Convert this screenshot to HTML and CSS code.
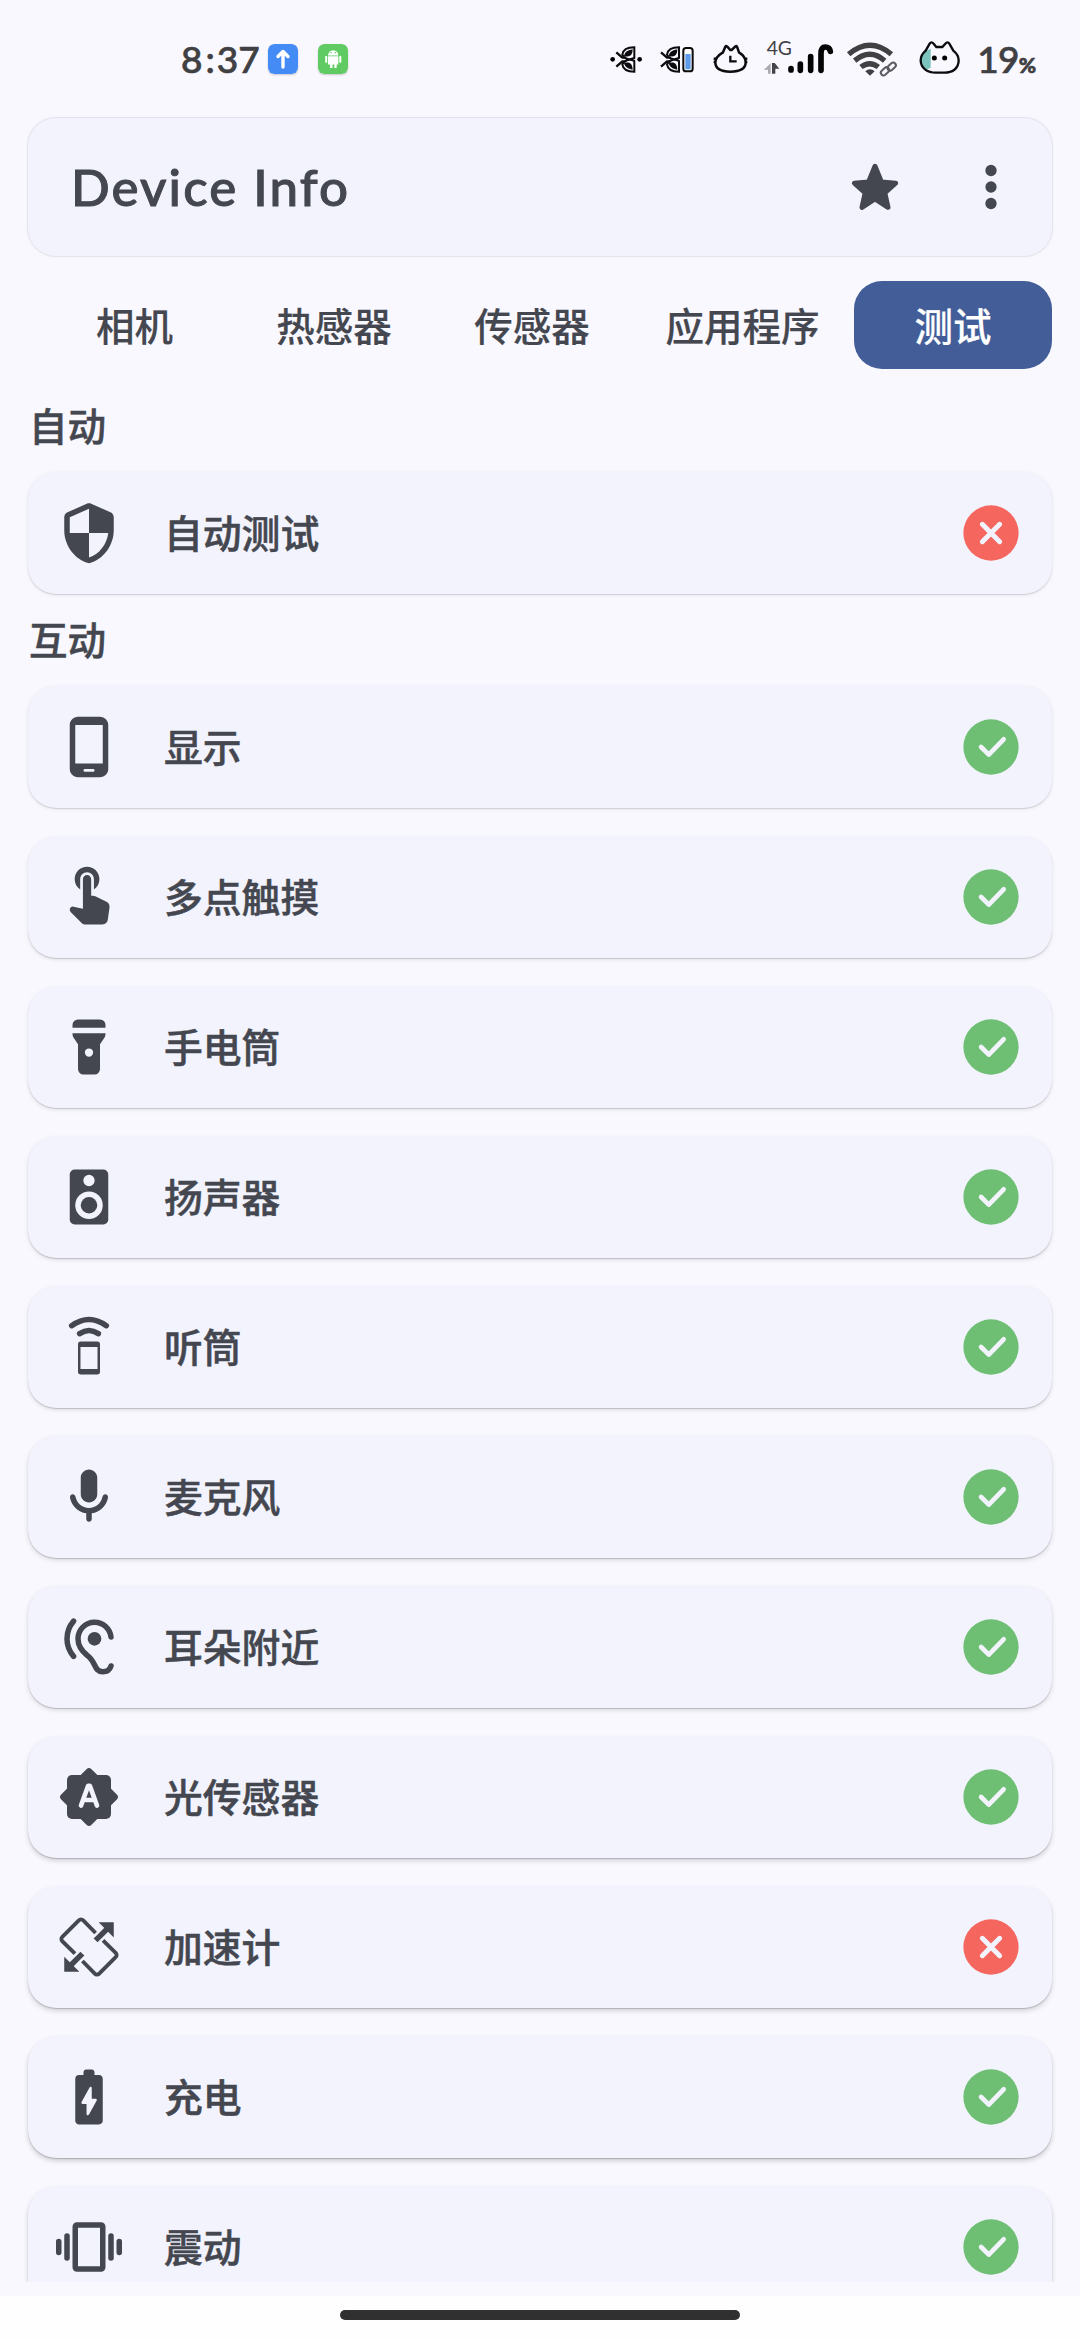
FILE: index.html
```html
<!DOCTYPE html>
<html lang="zh-CN">
<head>
<meta charset="utf-8">
<title>Device Info</title>
<link rel="stylesheet" href="styles.css">
</head>
<body>
<svg class="symbols" width="0" height="0">
  <symbol id="ok" viewBox="0 0 24 24"><circle class="green" cx="12" cy="12" r="10.05"/><path class="mark" stroke-width="1.7" d="M8.4 12l2.8 2.75L16.6 9.2"/></symbol>
  <symbol id="fail" viewBox="0 0 24 24"><circle class="red" cx="12" cy="12" r="10.05"/><path class="mark" stroke-width="1.8" d="M8.85 8.85l6.3 6.3M15.15 8.85l-6.3 6.3"/></symbol>
</svg>
<div class="screen">
  <div class="statusbar">
    <span class="clock">8<span class="colon">:</span>37</span>
    <svg class="chip" viewBox="0 0 30 30"><rect width="30" height="30" rx="6" fill="#448bf5"/><path d="M15 23V8.5M10 12.5l5-5 5 5" fill="none" stroke="#fff" stroke-width="3.4" stroke-linecap="round" stroke-linejoin="round"/></svg>
    <svg class="chip" viewBox="0 0 30 30"><rect width="30" height="30" rx="6" fill="#5fcb62"/><path fill="#fff" d="M10 11.5a5.2 5.2 0 0 1 10.4 0zM10 12.2h10.4v8.3h-1.7V24h-2.4v-3.5h-1.8V24h-2.4v-3.5H10zM7.2 12.2q1-1 2 0v6q-1 1-2 0zM21.3 12.2q1-1 2 0v6q-1 1-2 0z"/><path fill="#5fcb62" d="M12.5 8h1.2v1.2h-1.2zM16.8 8H18v1.2h-1.2z"/></svg>
    <div class="tray">
      <svg width="46.67" height="80" viewBox="50 0 140 240"><g id="leaf"><path d="M78 97l18 16h12M78 140l18-16h12" fill="none" stroke="#0c0c0e" stroke-width="7"/><path d="M96 104c2-14 14-22 36-22v32c-12 6-28 6-36-10zM96 133c2 14 14 22 36 22v-32c-12-6-28-6-36 10z" fill="none" stroke="#0c0c0e" stroke-width="6"/><path d="M101 107c4-12 11-16 26-19 0 20-12 25-26 19zM101 130c4 12 11 16 26 19 0-20-12-25-26-19z" fill="#0c0c0e"/></g><circle cx="67" cy="118" r="7"/><circle cx="148" cy="118" r="7"/></svg>
      <svg width="53.33" height="80" viewBox="190 0 160 240"><use href="#leaf" x="133"/><rect x="278" y="84" width="28" height="70" rx="8" fill="#fff" stroke="#0c0c0e" stroke-width="6"/><path d="M284 102h16v46h-16z" fill="#5d9bea"/></svg>
      <svg width="50" height="80" viewBox="350 0 150 240"><path d="M398 97l7-17q3-4 8 2l7 8h4l8-8q5-6 8-2l6 17c14 9 20 20 20 30 0 20-17 28-46 28s-45-8-45-28c0-10 8-21 23-30zM370 116h8M370 126h8M464 116h7M464 126h7" fill="none" stroke="#0c0c0e" stroke-width="7.5"/><path d="M420 107v17h19" fill="none" stroke="#0c0c0e" stroke-width="7"/></svg>
      <svg width="83.33" height="80" viewBox="500 0 250 240"><text class="network" x="529" y="105">4G</text><path d="M541 130v31h-8v-12l-13 1z" fill="#aaaab0"/><path d="M545 161v-32h8l14 17h-12v15z" fill="#444449"/><path d="M602 146v4M630 132v19M661 110v41M692 151v-50q0-20 13-20t15 13" fill="none" stroke="#050506" stroke-width="17" stroke-linecap="round"/></svg>
      <svg width="70" height="80" viewBox="750 0 210 240"><g fill="none" stroke="#414144" stroke-width="16"><path d="M776 103q64-54 128 0M794 122q46-38 90 0M813 141q26-20 52 0"/></g><path d="M826 154q14-12 28 0l-14 13z" fill="#414144"/><g fill="none" stroke="#5c5c60" stroke-width="6"><rect x="871" y="146" width="28" height="16" rx="8" transform="rotate(-42 885 154)"/><rect x="891" y="132" width="28" height="16" rx="8" transform="rotate(-42 905 140)"/></g></svg>
      <svg width="66" height="80" viewBox="960 0 198 240"><path d="M1022 86q-30 12-30 35 0 18 16 28l14-6z" fill="#7cc2bd"/><path d="M1007 92l12-21q5-8 12 0l8 10h18l9-10q7-8 12 0l12 21c11 9 16 18 16 29 0 26-20 37-43 37h-26c-23 0-45-12-45-37 0-12 6-21 15-29z" fill="none" stroke="#0c0c0e" stroke-width="7"/><circle cx="1033" cy="114" r="7.5"/><circle cx="1064" cy="114" r="7.5"/></svg>
      <span class="battery">19<small>%</small></span>
    </div>
  </div>

  <header class="appbar">
    <h1>Device Info</h1>
    <svg class="icon star" viewBox="0 0 66 66"><path stroke="#44474f" stroke-width="5" stroke-linejoin="round" d="M33 12.3l6.4 15.7 14.2 1.2-10.8 9.6 3.2 14.5L33 45l-13 8.3 3.2-14.5-10.8-9.6L26.6 28z"/></svg>
    <svg class="icon" viewBox="0 0 24 24"><circle cx="12" cy="6" r="2.05"/><circle cx="12" cy="12" r="2.05"/><circle cx="12" cy="18" r="2.05"/></svg>
  </header>

  <nav class="tabs">
    <span class="tab first">相机</span>
    <span class="tab">热感器</span>
    <span class="tab">传感器</span>
    <span class="tab wide">应用程序</span>
    <span class="tab active">测试</span>
  </nav>

  <main class="content">
    <h2 class="first">自动</h2>
    <div class="list">
      <div class="card s1">
        <svg class="icon" viewBox="0 0 24 24"><path d="M11.19 1.36l-7 3.11C3.47 4.79 3 5.51 3 6.3V11c0 5.55 3.84 10.74 9 12 5.16-1.26 9-6.45 9-12V6.3c0-.79-.47-1.51-1.19-1.83l-7-3.11c-.51-.23-1.11-.23-1.62 0zM12 11.99h7c-.53 4.12-3.28 7.79-7 8.94V12H5V6.3l7-3.11v8.8z"/></svg>
        <span class="label">自动测试</span><svg class="icon"><use href="#fail"/></svg>
      </div>
    </div>
    <h2>互动</h2>
    <div class="list">
      <div class="card s1">
        <svg class="icon" viewBox="0 0 24 24"><path fill-rule="evenodd" d="M16 1H8C6.34 1 5 2.34 5 4v16c0 1.66 1.34 3 3 3h8c1.66 0 3-1.34 3-3V4c0-1.66-1.34-3-3-3zM13.5 21h-3a.5.5 0 0 1 0-1h3a.5.5 0 0 1 0 1zM17 18H7V4h10z"/></svg>
        <span class="label">显示</span><svg class="icon"><use href="#ok"/></svg>
      </div>
      <div class="card s2">
        <svg class="icon" viewBox="0 0 24 24"><path d="M8.79 9.24V5.5C8.79 4.12 9.91 3 11.29 3s2.5 1.12 2.5 2.5v3.74c1.21-.81 2-2.18 2-3.74C15.79 3.01 13.78 1 11.29 1s-4.5 2.01-4.5 4.5C6.79 7.06 7.58 8.43 8.79 9.24zM14.29 11.71c-.28-.14-.58-.21-.89-.21h-.61v-6C12.79 4.67 12.12 4 11.29 4s-1.5.67-1.5 1.5v10.74l-3.44-.72c-.37-.08-.76.04-1.03.31-.43.44-.43 1.14 0 1.58l4.01 4.01C9.71 21.79 10.22 22 10.75 22h6.1c1 0 1.84-.73 1.98-1.72l.63-4.47c.12-.85-.32-1.69-1.09-2.07z"/></svg>
        <span class="label">多点触摸</span><svg class="icon"><use href="#ok"/></svg>
      </div>
      <div class="card s2">
        <svg class="icon" viewBox="0 0 24 24"><path fill-rule="evenodd" d="M8 2h8a2 2 0 0 1 2 2v1H6V4a2 2 0 0 1 2-2zM6 7h12v.4a2 2 0 0 1-.34 1.1L16 11v9a2 2 0 0 1-2 2h-4a2 2 0 0 1-2-2v-9L6.34 8.5A2 2 0 0 1 6 7.4zM12 12.5a1.5 1.5 0 1 0 0 3 1.5 1.5 0 0 0 0-3z"/></svg>
        <span class="label">手电筒</span><svg class="icon"><use href="#ok"/></svg>
      </div>
      <div class="card s3">
        <svg class="icon" viewBox="0 0 24 24"><rect x="5" y="2" width="14" height="20" rx="1.8"/><circle class="hole" cx="12" cy="6" r="2.05"/><circle class="hole" cx="12" cy="15" r="5"/><circle cx="12" cy="15" r="3"/></svg>
        <span class="label">扬声器</span><svg class="icon"><use href="#ok"/></svg>
      </div>
      <div class="card s3">
        <svg class="icon" viewBox="0 0 24 24"><path fill-rule="evenodd" d="M9 10h6a1 1 0 0 1 1 1v10a1 1 0 0 1-1 1H9a1 1 0 0 1-1-1V11a1 1 0 0 1 1-1zM8.9 12v8h6.2v-8z"/><path class="line" d="M8.6 7.15Q12 4.9 15.4 7.15M5.7 4.25Q12-.25 18.3 4.25"/></svg>
        <span class="label">听筒</span><svg class="icon"><use href="#ok"/></svg>
      </div>
      <div class="card s4">
        <svg class="icon" viewBox="0 0 24 24"><path d="M12 14c1.66 0 3-1.34 3-3V5c0-1.66-1.34-3-3-3S9 3.34 9 5v6c0 1.66 1.34 3 3 3zm5.91-3c-.49 0-.9.36-.98.85C16.52 14.2 14.47 16 12 16s-4.52-1.8-4.93-4.15c-.08-.49-.49-.85-.98-.85-.61 0-1.09.54-1 1.14.49 3 2.89 5.35 5.91 5.78V20c0 .55.45 1 1 1s1-.45 1-1v-2.08c3.02-.43 5.42-2.78 5.91-5.78.1-.6-.39-1.14-1-1.14z"/></svg>
        <span class="label">麦克风</span><svg class="icon"><use href="#ok"/></svg>
      </div>
      <div class="card s4">
        <svg class="icon" viewBox="0 0 24 24"><circle cx="14" cy="9" r="2.5"/><path class="line" d="M6.4 2.6Q4 5.4 4 9t2.4 6.4M20 8.4C19.7 5.3 17.1 3 14 3a6 6 0 0 0-6 6c0 2.7 1.2 4.3 3.3 6 3.4 2.3 2.4 6 5.7 6 1.5 0 2.6-.8 3-2.1"/></svg>
        <span class="label">耳朵附近</span><svg class="icon"><use href="#ok"/></svg>
      </div>
      <div class="card s5">
        <svg class="icon" viewBox="0 0 24 24"><rect x="4" y="4" width="16" height="16" rx="1.8"/><rect x="4.2" y="4.2" width="15.6" height="15.6" rx="1.3" transform="rotate(45 12 12)"/><path class="mark" stroke-width="1.7" d="M9.1 15.1l2.6-7.2h.6l2.6 7.2M10 13.1h4"/></svg>
        <span class="label">光传感器</span><svg class="icon"><use href="#ok"/></svg>
      </div>
      <div class="card s5">
        <svg class="icon" viewBox="0 0 24 24"><path fill="none" stroke="#44474f" stroke-width="1.4" d="M14.4 6.9L9.9 2.3a1.1 1.1 0 0 0-1.6 0l-6 6a1.1 1.1 0 0 0 0 1.6l4.6 4.5M17.1 9.6l4.6 4.5a1.1 1.1 0 0 1 0 1.6l-6 6a1.1 1.1 0 0 1-1.6 0l-4.5-4.6"/><path fill="none" stroke="#44474f" stroke-width="2" d="M14.4 9.6l4.8-4.8M9.6 14.4l-4.8 4.8"/><path d="M15.5 3H21v5.5zM8.5 21H3v-5.5z"/></svg>
        <span class="label">加速计</span><svg class="icon"><use href="#fail"/></svg>
      </div>
      <div class="card s6">
        <svg class="icon" viewBox="0 0 24 24"><path fill-rule="evenodd" d="M15.67 4H14V3c0-.55-.45-1-1-1h-2c-.55 0-1 .45-1 1v1H8.33C7.6 4 7 4.6 7 5.33v15.33C7 21.4 7.6 22 8.34 22h7.32c.74 0 1.34-.6 1.34-1.33V5.33C17 4.6 16.4 4 15.67 4zM13 8.7v3.9h1.4c.4 0 .6.4.4.7L12 18.4c-.3.4-.9.3-.9-.2v-3.7H9.7c-.4 0-.6-.4-.4-.7l2.9-5.3c.2-.4.8-.3.8.2z"/></svg>
        <span class="label">充电</span><svg class="icon"><use href="#ok"/></svg>
      </div>
      <div class="card s6">
        <svg class="icon" viewBox="0 0 24 24"><rect x="7" y="4" width="10" height="16" rx=".6" fill="none" stroke="#44474f" stroke-width="2"/><path class="line" d="M4 8v8M1 10v4M20 8v8M23 10v4"/></svg>
        <span class="label">震动</span><svg class="icon"><use href="#ok"/></svg>
      </div>
    </div>
  </main>
  <footer class="navbar"><div class="handle"></div></footer>
</div>
</body>
</html>
```
FILE: styles.css
```css
* { box-sizing: border-box; }
body { margin: 0; background: #f9f8ff; color: #44474f; font-family: "Noto Sans CJK SC", sans-serif; }
.symbols { position: absolute; }
.screen { width: 1080px; height: 2340px; display: flex; flex-direction: column; overflow: hidden; }

.statusbar { height: 118px; flex: none; display: flex; align-items: flex-start; padding-left: 181px; font-family: Lato, sans-serif; color: #404043; }
.clock { width: 87px; font-size: 37px; line-height: 46px; margin-top: 36px; font-weight: 500; white-space: nowrap; -webkit-text-stroke: 0.7px #404043; }
.colon { padding: 0 2px 0 3px; }
.chip { width: 30px; height: 30px; margin: 44px 20px 0 0; border-radius: 6px; box-shadow: 0 1px 2px rgba(0, 0, 0, .2); }
.tray { display: flex; margin: 20px 0 0 239px; }
.tray svg { flex: none; }
.network { font: 58px Lato, sans-serif; fill: #404043; }
.battery { font-size: 37px; line-height: 46px; margin-top: 16px; padding-left: 1px; white-space: nowrap; font-weight: 500; letter-spacing: -0.8px; -webkit-text-stroke: 0.7px #404043; }
.battery small { font-size: 21px; font-weight: 900; letter-spacing: 0; }

.appbar { flex: none; height: 138px; margin: 0 28px; padding: 0 28px 0 43px; display: flex; align-items: center; border-radius: 28px; background: #f2f3fd; box-shadow: 0 0 0 1px #e4e4ec, 0 0 4px rgba(0, 0, 0, .06); }
.appbar h1 { flex: 1; margin: 0; font: 500 51px/60px Lato, sans-serif; letter-spacing: 2.1px; -webkit-text-stroke: 1px #44474f; }
.icon { width: 66px; height: 66px; flex: none; fill: #44474f; overflow: visible; }
.star { margin-right: 50px; }
.line { fill: none; stroke: #44474f; stroke-width: 2; stroke-linecap: round; stroke-linejoin: round; }
.mark { fill: none; stroke: #f2f3fd; stroke-linecap: round; stroke-linejoin: round; }
.hole { fill: #f2f3fd; }
.green { fill: #6ebf74; }
.red { fill: #f5675e; }

.tabs { flex: none; height: 88px; margin: 25px 28px 0; display: flex; justify-content: flex-end; }
.tab { width: 198px; border-radius: 28px; font-size: 38.5px; font-weight: 500; line-height: 86px; text-align: center; white-space: nowrap; -webkit-text-stroke: 0.2px currentColor; }
.tab.first { width: 201px; }
.tab.wide { width: 223px; }
.tab.active { background: #435d99; color: #fff; }

.content { flex: none; height: 1913px; padding: 0 28px; overflow: hidden; }
.content h2 { margin: 0; padding: 16px 0 0 1px; height: 92px; font-size: 38.5px; line-height: 56px; font-weight: 500; -webkit-text-stroke: 0.5px #44474f; }
.content h2.first { height: 103px; padding-top: 27px; }
.list { display: flex; flex-direction: column; gap: 28px; }
.card { height: 122px; flex: none; display: flex; align-items: center; padding: 0 28px; border-radius: 28px; background: #f2f3fd; }
.label { flex: 1; padding: 0 0 4px 42px; font-size: 38.8px; line-height: 60px; font-weight: 500; -webkit-text-stroke: 0.5px #44474f; }
.s1 { box-shadow: 0 1px 1px rgba(0, 0, 0, .13), 0 1px 4px rgba(0, 0, 0, .08); }
.s2 { box-shadow: 0 1px 1px rgba(0, 0, 0, .15), 0 2px 4px rgba(0, 0, 0, .09); }
.s3 { box-shadow: 0 1px 1px rgba(0, 0, 0, .17), 0 2px 4px rgba(0, 0, 0, .11); }
.s4 { box-shadow: 0 1px 1px rgba(0, 0, 0, .18), 0 2px 5px rgba(0, 0, 0, .13); }
.s5 { box-shadow: 0 1px 1px rgba(0, 0, 0, .18), 0 3px 5px rgba(0, 0, 0, .15); }
.s6 { box-shadow: 0 1px 1px rgba(0, 0, 0, .18), 0 3px 5px rgba(0, 0, 0, .17); }

.navbar { flex: none; height: 44px; margin-top: 14px; padding-top: 14px; background: #fefefe; }
.handle { width: 400px; height: 10px; margin: 0 auto; border-radius: 5px; background: #303030; }
```
